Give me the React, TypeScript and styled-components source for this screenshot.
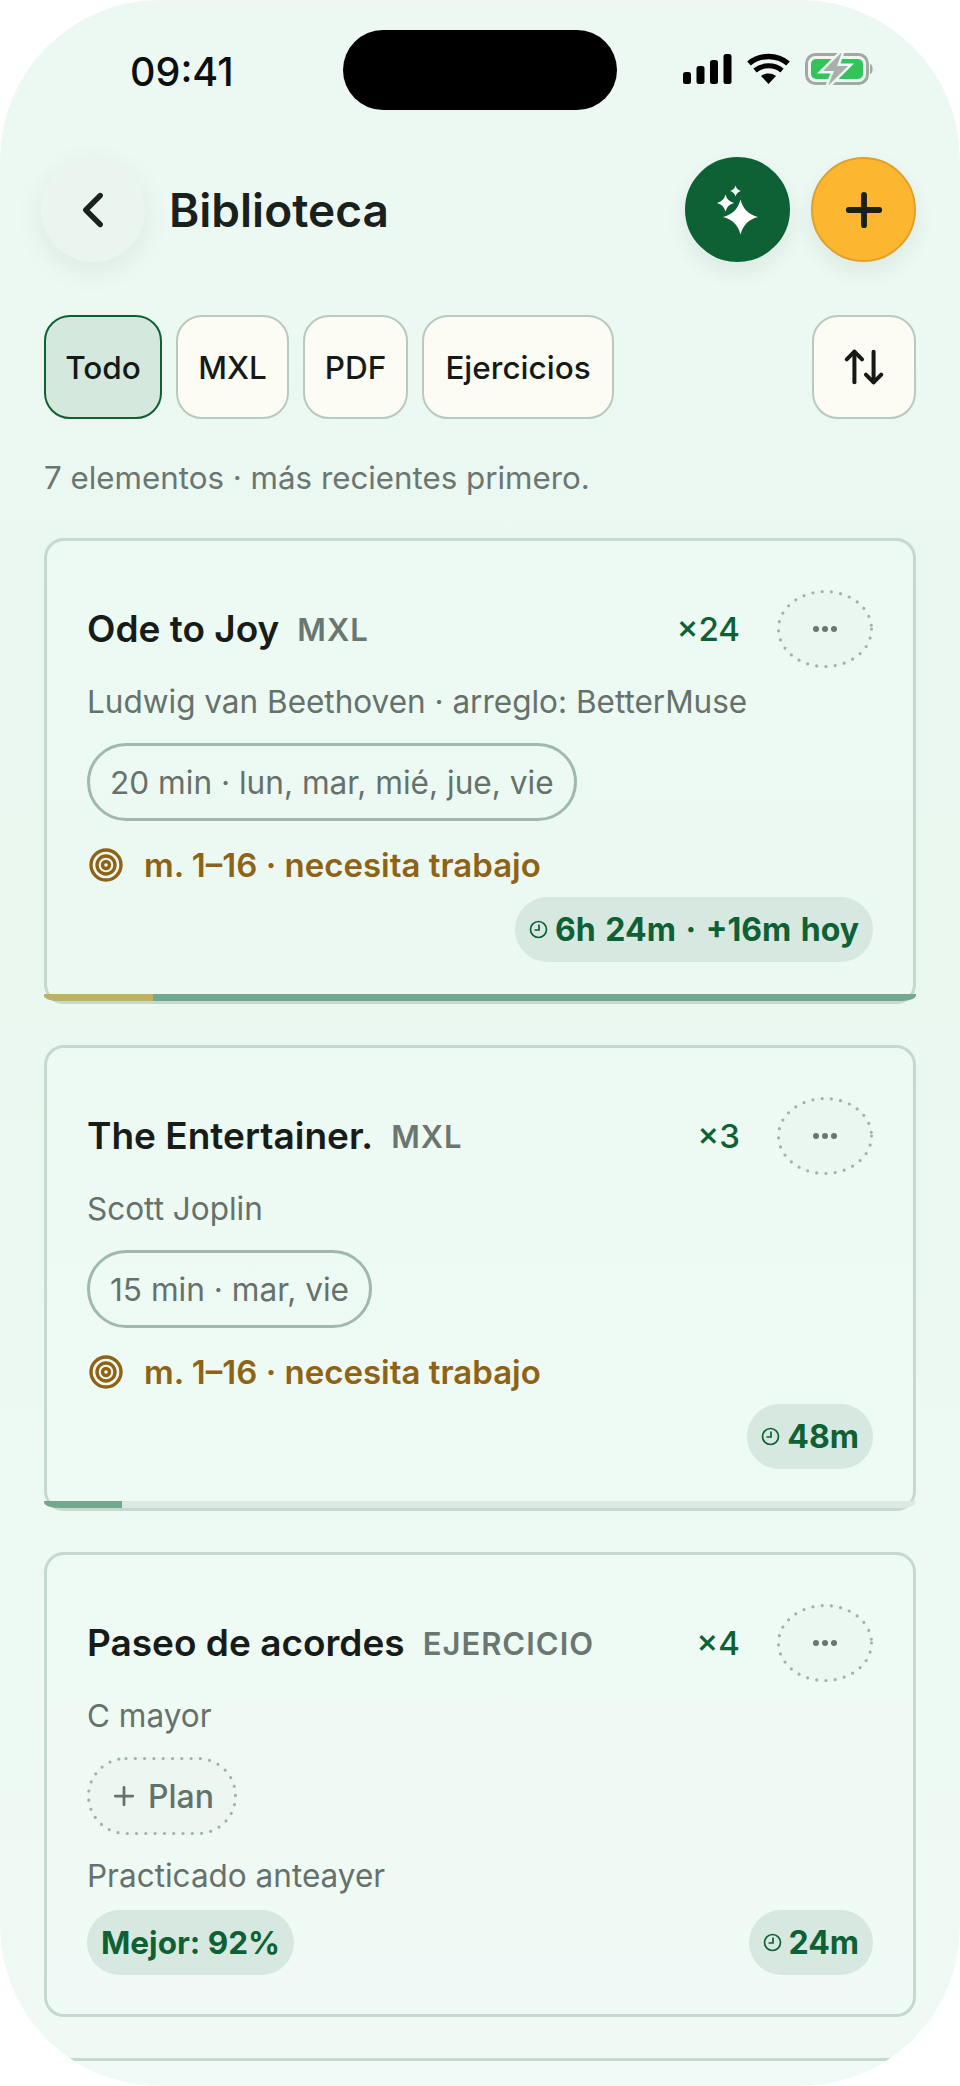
import React from "react";
import styled, { createGlobalStyle } from "styled-components";
import { ArrowUpDown, ChevronLeft, Plus } from "lucide-react";

const Global = createGlobalStyle`
  html, body { margin: 0; padding: 0; background: #fff; }
  * { box-sizing: border-box; }
  body { font-family: Inter, "Liberation Sans", sans-serif; }
`;
const Phone = styled.div`
  width: 960px; height: 2086px; overflow: hidden; border-radius: 160px;
  background: linear-gradient(180deg, #edf8f3 0%, #eaf8f0 45%, #f0faf5 100%);
`;
const StatusBar = styled.div`height: 157px; padding-top: 30px; display: flex; align-items: flex-start;`;
const Time = styled.div`
  width: 343px; padding: 19px 0 0 130px; font-size: 39.5px; line-height: 46px; font-weight: 500; color: #0c0f0d;
`;
const Island = styled.div`width: 274px; height: 80px; border-radius: 40px; background: #000;`;
const StatusIcons = styled.div`width: 343px; display: flex; justify-content: flex-end; padding: 23px 85px 0 0;`;
const Content = styled.div`padding: 0 44px;`;
const Header = styled.div`display: flex; align-items: center; height: 105px;`;
const BackButton = styled.button`
  width: 104px; height: 104px; margin: 0 24px 0 -3px; border: 0; border-radius: 50%; background: #ebf5ef; padding: 0;
  display: flex; align-items: center; justify-content: center; color: #1b211d;
  box-shadow: 0 8px 30px rgba(30, 50, 40, 0.07);
`;
const Title = styled.h1`flex: 1; margin: 0; font-size: 46px; line-height: 56px; font-weight: 600; color: #1a201c;`;
const RoundButton = styled.button<{ $tone: "green" | "amber" }>`
  width: 105px; height: 105px; margin-left: 21px; border-radius: 50%; padding: 0;
  display: flex; align-items: center; justify-content: center;
  background: ${(p) => (p.$tone === "green" ? "#0d6135" : "#fdb62f")};
  border: 2px solid ${(p) => (p.$tone === "green" ? "#0d6135" : "#dfa02c")};
  box-shadow: 0 10px 22px rgba(30, 50, 40, 0.07);
  color: #1a201c;
`;
const Filters = styled.div`display: flex; align-items: stretch; gap: 14px; margin-top: 53px; height: 104px;`;
const Chip = styled.button<{ $active?: boolean; $w: number }>`
  width: ${(p) => p.$w}px; border-radius: 26px; padding: 0;
  border: ${(p) => (p.$active ? "2px solid #0d6135" : "2.5px solid #b8cabf")};
  background: ${(p) => (p.$active ? "#d5e8de" : "#fdfcf4")};
  font: 500 31.5px Inter, sans-serif; color: #151a17;
`;
const SortChip = styled(Chip)`margin-left: auto; display: flex; align-items: center; justify-content: center;`;
const Summary = styled.p`margin: 39px 0 40px; font-size: 31.3px; line-height: 40px; color: #6b7670;`;
const Card = styled.article<{ $top?: number; $h?: number }>`
  position: relative; margin-top: ${(p) => p.$top ?? 0}px; height: ${(p) => p.$h ?? 466}px; padding: 49px 40px 0;
  border: 3px solid #c6d9ce; border-radius: 20px; background: rgba(243, 251, 247, 0.3);
  display: flex; flex-direction: column;
`;
const TitleRow = styled.div`display: flex; align-items: center; height: 78px;`;
const CardTitle = styled.h2`margin: 0 18px 0 0; font-size: 37px; line-height: 46px; font-weight: 600; color: #171c19;`;
const Kind = styled.span`font-size: 31px; font-weight: 600; letter-spacing: 1px; color: #6b7670;`;
const Count = styled.span`margin-left: auto; margin-right: 37px; font-size: 33px; font-weight: 500; color: #0d6135;`;
const More = styled.button`
  position: relative; width: 96px; height: 78px; border: 0; border-radius: 50%; background: rgba(228, 239, 232, 0.25); padding: 0;
  display: flex; align-items: center; justify-content: center; gap: 3px;
`;
const DotRing = styled.svg`position: absolute; inset: 0; overflow: visible;`;
const Dot = styled.i`width: 6px; height: 6px; border-radius: 50%; background: #6b7670;`;
const Sub = styled.p<{ $gap?: number }>`margin: ${(p) => p.$gap ?? 14}px 0 0; font-size: 31.5px; line-height: 40px; color: #66716b;`;
const Plan = styled.div`
  align-self: flex-start; margin-top: 21px; height: 78px; padding: 0 20px; border-radius: 39px;
  border: 3px solid #9fbaad; display: flex; align-items: center; font-size: 31.6px; color: #66716b;
`;
const AddPlan = styled.div`
  position: relative; align-self: flex-start; margin-top: 21px; width: 150px; height: 78px; padding: 0 0 0 22px; border-radius: 39px;
  background: rgba(228, 239, 232, 0.25); display: flex; align-items: center; gap: 9px; font-size: 32px; font-weight: 500; color: #66716b;
`;
const Target = styled.div`
  margin-top: 24px; height: 40px; display: flex; align-items: center; gap: 21px;
  font-size: 33px; font-weight: 600; color: #8f6316; padding-left: 2px;
`;
const Footer = styled.div<{ $between?: boolean }>`
  margin-top: ${(p) => (p.$between ? 14 : 12)}px; display: flex; justify-content: ${(p) => (p.$between ? "space-between" : "flex-end")};
`;
const Badge = styled.div`
  height: 65px; padding: 0 14px; border-radius: 33px; background: #d6e8df;
  display: flex; align-items: center; gap: 7px; font-size: 32px; font-weight: 700; word-spacing: 2px; color: #0d6135;
`;
const ScoreBadge = styled(Badge)`font-size: 31.5px; word-spacing: 0;`;
const Track = styled.div`
  position: absolute; left: -3px; right: -3px; bottom: 0; height: 7px; overflow: hidden;
  border-radius: 0 0 14px 14px / 0 0 6px 6px; background: #dfe9e3;
`;
const Fill = styled.div<{ $w: string }>`height: 100%; width: ${(p) => p.$w}; background: #72a98e; position: relative;`;
const Weak = styled.div<{ $w: number }>`position: absolute; left: 0; top: 0; bottom: 0; width: ${(p) => p.$w}px; background: #bfb25f;`;

const StatusGlyphs = () => (
  <svg width="192" height="32" viewBox="0 0 192 32" fill="#000">
    <rect x="0" y="19" width="8" height="12" rx="2.500" />
    <rect x="13.500" y="13" width="8" height="18" rx="2.500" />
    <rect x="27" y="7" width="8" height="24" rx="2.500" />
    <rect x="40.500" y="1" width="8" height="30" rx="2.500" />
    <path d="M85.500 31l-7.500-8c4.300-3.300 10.700-3.300 15 0z" />
    <path d="M72 17.500c7.500-6.300 19.500-6.300 27 0" fill="none" stroke="#000" strokeWidth="5" />
    <path d="M66 10.500c11-9.400 28-9.400 39 0" fill="none" stroke="#000" strokeWidth="5.500" />
    <rect x="123.500" y="1.500" width="61" height="29" rx="9" fill="none" stroke="#a3a8a5" strokeWidth="3" />
    <rect x="128" y="6" width="52" height="20" rx="5" fill="#33c35b" />
    <path d="M187 11c3.500.7 3.500 9.300 0 10z" fill="#a3a8a5" />
    <path d="M159 -1l-19 19h11l-6 15 20-20h-11z" fill="#edf8f3" stroke="#edf8f3" strokeWidth="5" />
    <path d="M159 -1l-19 19h11l-6 15 20-20h-11z" fill="#a9b0ac" />
  </svg>
);
const star = (x: number, y: number, r: number) => {
  const k = r * 0.2;
  return `M${x} ${y - r}Q${x + k} ${y - k} ${x + r} ${y}Q${x + k} ${y + k} ${x} ${y + r}Q${x - k} ${y + k} ${x - r} ${y}Q${x - k} ${y - k} ${x} ${y - r}z`;
};
const Sparkles = () => (
  <svg width="44" height="53" viewBox="0 0 44 53" fill="#fff">
    <path d={star(24.500, 34, 17.500)} />
    <path d={star(9.500, 20, 8.500)} />
    <path d={star(19.500, 8, 5.500)} />
  </svg>
);
const TargetIcon = () => (
  <svg width="34" height="34" viewBox="0 0 34 34" fill="none" stroke="#8f6316" strokeWidth="3.400">
    <circle cx="17" cy="17" r="15" />
    <circle cx="17" cy="17" r="9" />
    <circle cx="17" cy="17" r="3.500" />
  </svg>
);
const Clock = () => (
  <svg width="19" height="19" viewBox="0 0 19 19" fill="none" stroke="#0d6135" strokeWidth="1.700">
    <circle cx="9.500" cy="9.500" r="8" />
    <path d="M10 4.500V10H5.500" />
  </svg>
);
const MoreButton = () => (
  <More aria-label="Más">
    <DotRing width="96" height="78" viewBox="0 0 96 78" fill="none">
      <ellipse cx="48" cy="39" rx="46.500" ry="37.500" stroke="#a3afa8" strokeWidth="3.200" strokeLinecap="round" strokeDasharray="0 9.300" />
    </DotRing>
    <Dot /><Dot /><Dot />
  </More>
);

export default function App() {
  return (
    <Phone>
      <Global />
      <StatusBar>
        <Time>09:41</Time>
        <Island />
        <StatusIcons><StatusGlyphs /></StatusIcons>
      </StatusBar>
      <Content>
        <Header>
          <BackButton aria-label="Volver"><ChevronLeft size={58} strokeWidth={2.200} /></BackButton>
          <Title>Biblioteca</Title>
          <RoundButton $tone="green"><Sparkles /></RoundButton>
          <RoundButton $tone="amber"><Plus size={52} strokeWidth={2.700} /></RoundButton>
        </Header>
        <Filters>
          <Chip $active $w={118}>Todo</Chip>
          <Chip $w={113}>MXL</Chip>
          <Chip $w={105}>PDF</Chip>
          <Chip $w={192}>Ejercicios</Chip>
          <SortChip $w={104}><ArrowUpDown size={46} strokeWidth={2.100} /></SortChip>
        </Filters>
        <Summary>7 elementos · más recientes primero.</Summary>
        <Card>
          <TitleRow><CardTitle>Ode to Joy</CardTitle><Kind>MXL</Kind><Count>×24</Count><MoreButton /></TitleRow>
          <Sub>Ludwig van Beethoven · arreglo: BetterMuse</Sub>
          <Plan>20 min · lun, mar, mié, jue, vie</Plan>
          <Target><TargetIcon />m. 1–16 · necesita trabajo</Target>
          <Footer><Badge><Clock />6h 24m · +16m hoy</Badge></Footer>
          <Track><Fill $w="100%"><Weak $w={109} /></Fill></Track>
        </Card>
        <Card $top={41}>
          <TitleRow><CardTitle>The Entertainer.</CardTitle><Kind>MXL</Kind><Count>×3</Count><MoreButton /></TitleRow>
          <Sub>Scott Joplin</Sub>
          <Plan>15 min · mar, vie</Plan>
          <Target><TargetIcon />m. 1–16 · necesita trabajo</Target>
          <Footer><Badge><Clock />48m</Badge></Footer>
          <Track><Fill $w="9%" /></Track>
        </Card>
        <Card $top={41} $h={465}>
          <TitleRow><CardTitle>Paseo de acordes</CardTitle><Kind>EJERCICIO</Kind><Count>×4</Count><MoreButton /></TitleRow>
          <Sub>C mayor</Sub>
          <AddPlan>
            <DotRing width="150" height="78" viewBox="0 0 150 78" fill="none">
              <rect x="1.500" y="1.500" width="147" height="75" rx="37.500" stroke="#a3afa8" strokeWidth="3.200" strokeLinecap="round" strokeDasharray="0 9.300" />
            </DotRing>
            <Plus size={30} strokeWidth={2.200} />Plan
          </AddPlan>
          <Sub $gap={21}>Practicado anteayer</Sub>
          <Footer $between><ScoreBadge>Mejor: 92%</ScoreBadge><Badge><Clock />24m</Badge></Footer>
        </Card>
        <Card $top={41} />
      </Content>
    </Phone>
  );
}
